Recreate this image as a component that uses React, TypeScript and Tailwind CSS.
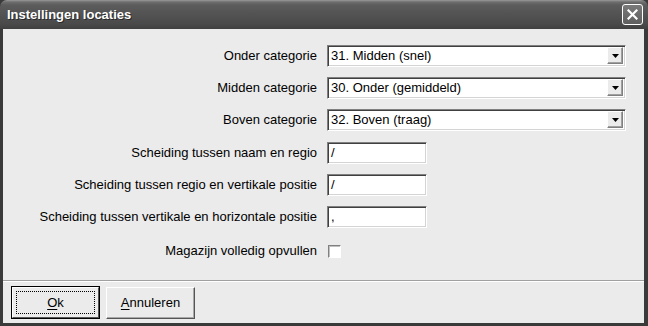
import React from 'react';

const font = { fontFamily: '"Liberation Sans", Arial, sans-serif' };

function Select({ value }: { value: string }) {
  return (
    <div className="flex h-[22px] w-[299px] border border-t-[#808080] border-l-[#808080] border-b-white border-r-white bg-white shadow-[inset_1px_1px_0_#404040,inset_-1px_-1px_0_#d4d4d4]">
      <div className="flex flex-1 items-center pl-[3px] text-[13px] text-black">{value}</div>
      <div className="m-px mr-[2px] mb-[2px] flex w-[16px] items-center justify-center border border-t-white border-l-white border-b-[#808080] border-r-[#808080] bg-[#ebebeb] shadow-[inset_-1px_-1px_0_#a0a0a0]">
        <svg width="7" height="4" viewBox="0 0 7 4">
          <path d="M0 0h7L3.5 4z" fill="#000" />
        </svg>
      </div>
    </div>
  );
}

function TextBox({ value }: { value: string }) {
  return (
    <div className="flex h-[22px] w-[100px] items-center border border-t-[#808080] border-l-[#808080] border-b-white border-r-white bg-white pl-[3px] text-[13px] text-black shadow-[inset_1px_1px_0_#404040,inset_-1px_-1px_0_#d4d4d4]">
      {value}
    </div>
  );
}

function Row({ label, children, className = '' }: { label: string; children: React.ReactNode; className?: string }) {
  return (
    <div className={`flex h-[22px] items-center ${className}`}>
      <div className="w-[316px] pr-[2px] text-right text-[13px] text-black">{label}</div>
      <div className="ml-[8px] flex items-center">{children}</div>
    </div>
  );
}

export default function App() {
  return (
    <div className="flex h-[326px] w-[648px] flex-col overflow-hidden bg-[#3a3a3a]" style={font}>
      {/* title bar */}
      <div className="flex h-[29px] items-center rounded-t-[7px] bg-[linear-gradient(#9a9a9a_0px,#6e6e6e_2px,#5c5c5c_5px,#535353_14px,#4a4a4a_24px,#404040_29px)] pl-[7px] pr-[5px]">
        <span className="flex-1 pt-[1px] text-[13px] font-bold text-white [text-shadow:1px_1px_0_#2a2a2a]">
          Instellingen locaties
        </span>
        <div className="flex h-[21px] w-[21px] items-center justify-center rounded-[3px] border border-white bg-[linear-gradient(#7a7a7a,#5e5e5e)]">
          <svg width="11" height="11" viewBox="0 0 11 11">
            <path d="M1.5 1.5l8 8M9.5 1.5l-8 8" stroke="#fff" strokeWidth="2.2" strokeLinecap="square" />
          </svg>
        </div>
      </div>

      {/* body */}
      <div className="ml-[3px] mr-[4px] mb-[3px] flex flex-1 flex-col bg-[#ebebeb]">
        <div className="flex flex-col gap-[10px] pt-[16px]">
          <Row label="Onder categorie">
            <Select value="31. Midden (snel)" />
          </Row>
          <Row label="Midden categorie">
            <Select value="30. Onder (gemiddeld)" />
          </Row>
          <Row label="Boven categorie">
            <Select value="32. Boven (traag)" />
          </Row>
          <Row label="Scheiding tussen naam en regio" className="mt-px">
            <TextBox value="/" />
          </Row>
          <Row label="Scheiding tussen regio en vertikale positie">
            <TextBox value="/" />
          </Row>
          <Row label="Scheiding tussen vertikale en horizontale positie">
            <TextBox value="," />
          </Row>
          <Row label="Magazijn volledig opvullen" className="mt-[2px]">
            <div className="ml-[1px] h-[13px] w-[13px] border border-t-[#808080] border-l-[#808080] border-b-white border-r-white bg-white shadow-[inset_1px_1px_0_#c0c0c0]" />
          </Row>
        </div>

        <div className="mt-auto border-t border-t-[#a0a0a0]">
          <div className="flex gap-[6px] border-t border-t-white px-[8px] pt-[4px] pb-[4px]">
            <button className="h-[33px] w-[89px] border border-black bg-[#ebebeb] p-0">
              <div className="flex h-full w-full items-center justify-center border border-t-white border-l-white border-b-[#555] border-r-[#555] p-[3px]">
                <div className="flex h-full w-full items-center justify-center border border-dotted border-black text-[13px] text-black">
                  <span className="underline underline-offset-2">O</span>k
                </div>
              </div>
            </button>
            <button className="mt-px h-[32px] w-[89px] border border-t-white border-l-white border-b-[#555] border-r-[#555] bg-[#ebebeb] text-[13px] text-black shadow-[inset_-1px_-1px_0_#a8a8a8]">
              <span className="underline underline-offset-2">A</span>nnuleren
            </button>
          </div>
        </div>
      </div>
    </div>
  );
}
